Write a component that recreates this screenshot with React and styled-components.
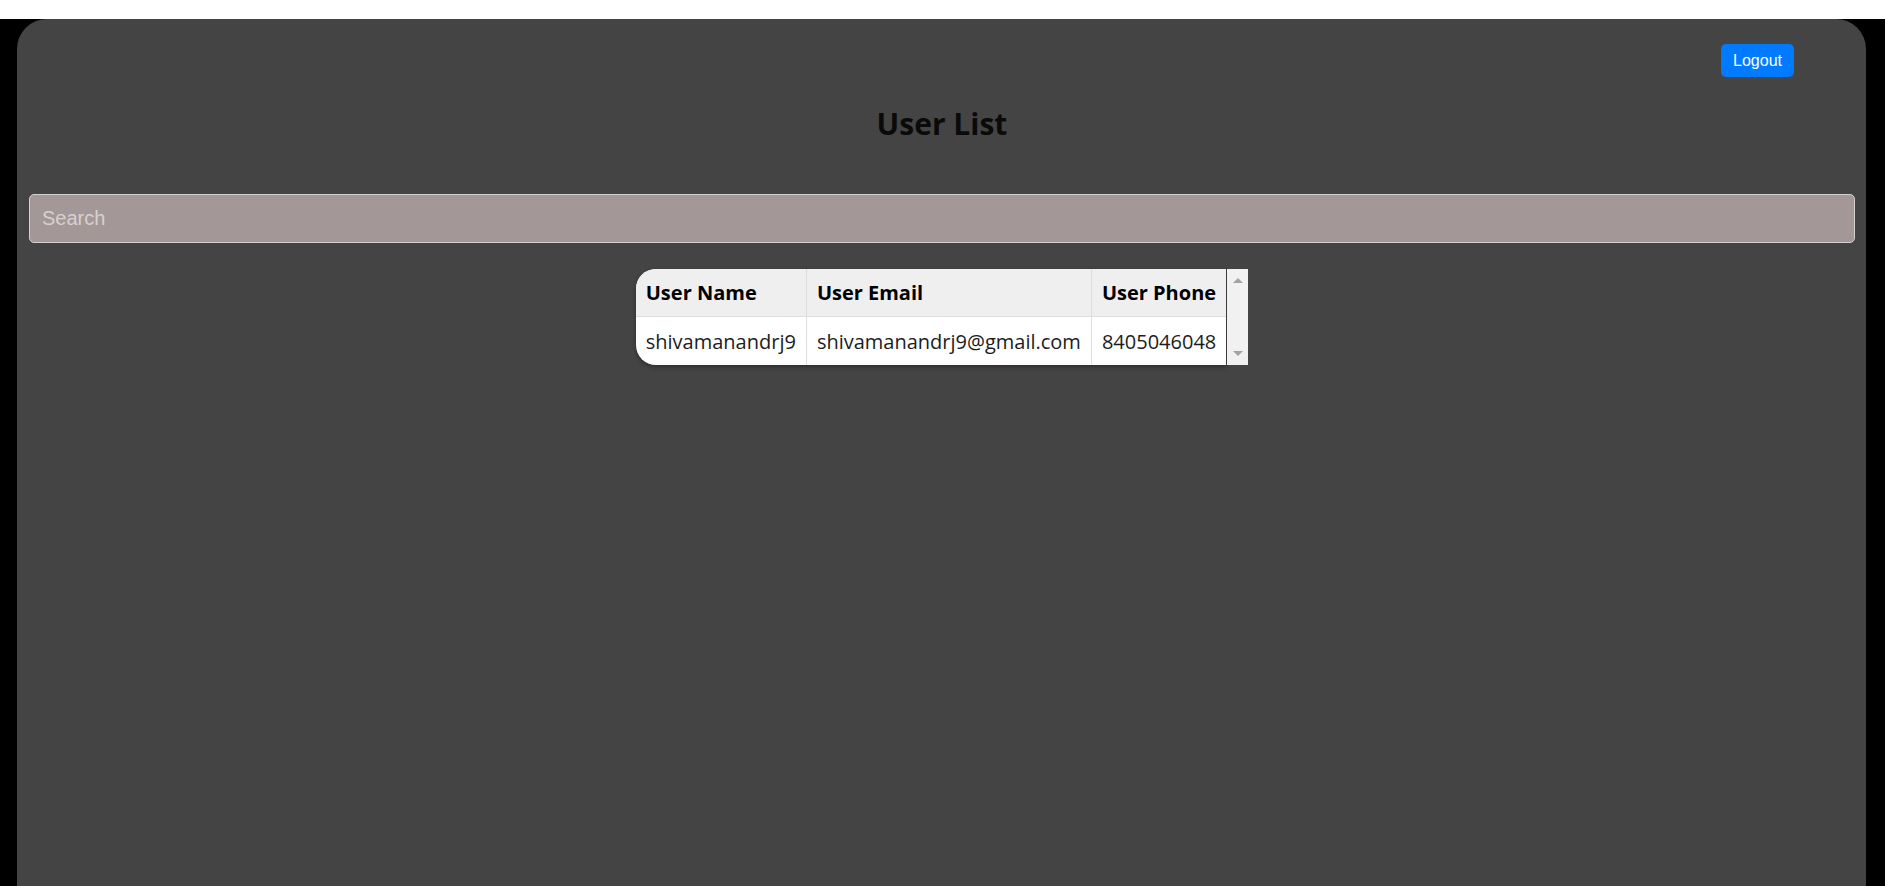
import React from 'react'
import styled, { createGlobalStyle } from 'styled-components'

const GlobalStyle = createGlobalStyle`
  html, body {
    margin: 0;
    padding: 0;
    background: #ffffff;
    overflow: hidden;
  }
  body {
    font-family: "Open Sans", "Liberation Sans", sans-serif;
  }
  * {
    box-sizing: border-box;
  }
`

const Page = styled.div`
  margin-top: 19px;
  height: calc(100vh - 19px);
  background: #000000;
  padding: 0 19px 0 17px;
  overflow: hidden;
`

const Panel = styled.div`
  height: 100%;
  background: #444444;
  border-radius: 30px 30px 0 0;
  padding: 25px 11px 0 12px;
`

const TopBar = styled.div`
  display: flex;
  justify-content: flex-end;
  padding-right: 61px;
`

const LogoutButton = styled.button`
  height: 33px;
  padding: 0 12px;
  border: none;
  border-radius: 5px;
  background: #007bff;
  color: #ffffff;
  font-family: "Liberation Sans", Arial, sans-serif;
  font-size: 16px;
  cursor: pointer;
`

const Title = styled.h2`
  margin: 26px 0 50px;
  text-align: center;
  font-size: 30px;
  line-height: 41px;
  font-weight: 700;
  color: #0a0a0a;
`

const SearchInput = styled.input`
  display: block;
  width: 100%;
  height: 49px;
  padding: 0 12px;
  margin: 0 0 26px;
  background: #a39797;
  border: 1px solid #d4cfcf;
  border-radius: 5px;
  font-family: "Liberation Sans", Arial, sans-serif;
  font-size: 20px;
  color: #222222;
  outline: none;

  &::placeholder {
    color: #d8d0d0;
  }
`

const TableWrap = styled.div`
  display: flex;
  width: fit-content;
  margin: 0 auto;
`

const Table = styled.table`
  border-collapse: separate;
  border-spacing: 0;
  background: #ffffff;
  border-radius: 20px 0 0 20px;
  overflow: hidden;
  box-shadow: 0 2px 4px rgba(0, 0, 0, 0.35);
`

const HeadCell = styled.th`
  background: #efefef;
  padding: 10px;
  height: 48px;
  text-align: left;
  font-size: 20px;
  font-weight: 700;
  color: #000000;
  white-space: nowrap;
  border-bottom: 1px solid #dddddd;
  border-left: ${(p) => (p.first ? 'none' : '1px solid #dddddd')};
`

const Cell = styled.td`
  padding: 10px;
  height: 48px;
  font-size: 20px;
  color: #1c1c1c;
  white-space: nowrap;
  border-left: ${(p) => (p.first ? 'none' : '1px solid #dddddd')};
`

const ScrollTrack = styled.div`
  width: 21px;
  margin-left: 1px;
  background: #f1f1f1;
  display: flex;
  flex-direction: column;
  justify-content: space-between;
  align-items: center;
  padding: 9px 0 9px;
`

const Arrow = styled.span`
  width: 0;
  height: 0;
  border-left: 5px solid transparent;
  border-right: 5px solid transparent;
  ${(p) =>
    p.down
      ? 'border-top: 5px solid #a3a3a3;'
      : 'border-bottom: 5px solid #a3a3a3;'}
`

const users = [
  {
    name: 'shivamanandrj9',
    email: 'shivamanandrj9@gmail.com',
    phone: '8405046048',
  },
]

export default function App() {
  return (
    <>
      <GlobalStyle />
      <Page>
        <Panel>
          <TopBar>
            <LogoutButton>Logout</LogoutButton>
          </TopBar>
          <Title>User List</Title>
          <SearchInput placeholder="Search" />
          <TableWrap>
            <Table>
              <thead>
                <tr>
                  <HeadCell first>User Name</HeadCell>
                  <HeadCell>User Email</HeadCell>
                  <HeadCell>User Phone</HeadCell>
                </tr>
              </thead>
              <tbody>
                {users.map((u) => (
                  <tr key={u.email}>
                    <Cell first>{u.name}</Cell>
                    <Cell>{u.email}</Cell>
                    <Cell>{u.phone}</Cell>
                  </tr>
                ))}
              </tbody>
            </Table>
            <ScrollTrack>
              <Arrow />
              <Arrow down />
            </ScrollTrack>
          </TableWrap>
        </Panel>
      </Page>
    </>
  )
}
